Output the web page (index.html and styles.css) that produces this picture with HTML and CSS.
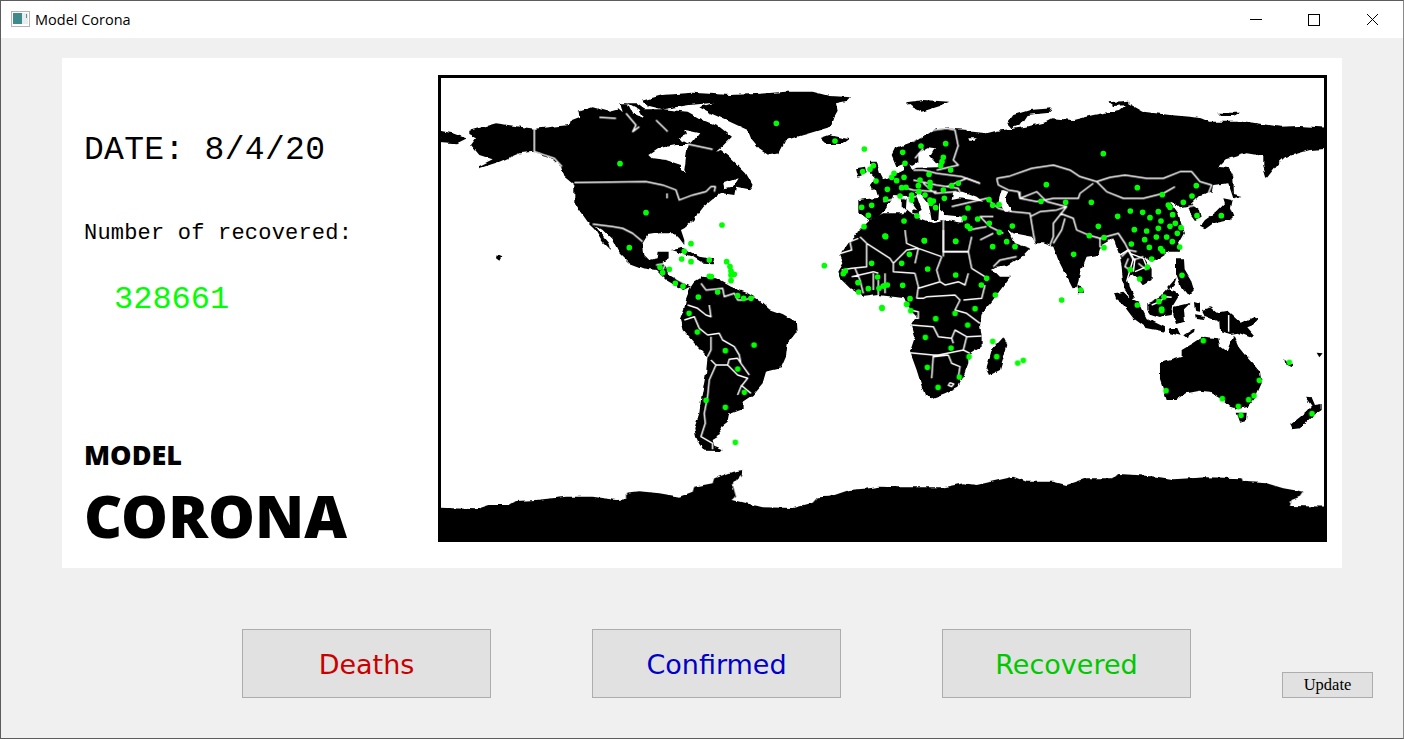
FILE: index.html
```html
<!DOCTYPE html>
<html lang="en">
<head>
    <meta charset="UTF-8">
    <meta name="viewport" content="width=device-width, initial-scale=1.0">
    <title>Model Corona</title>
    <link rel="stylesheet" href="styles.css">
</head>
<body>
    <div class="window">
        <div class="titlebar">
            <svg class="app-icon" width="20" height="17" viewBox="0 0 20 17">
                <rect x="0.5" y="0.5" width="18" height="15" fill="#fff" stroke="#b5b5b5"/>
                <rect x="2" y="2" width="9" height="11" fill="#3f8a8a"/>
                <rect x="11" y="2" width="6" height="11" fill="#e8eeee"/>
                <rect x="15" y="3" width="1" height="4" fill="#5f8f8f"/>
            </svg>
            <span class="app-title">Model Corona</span>
            <div class="controls">
                <svg class="control" width="58" height="38" viewBox="0 0 58 38"><path d="M23 18.5h12" stroke="#000" fill="none"/></svg>
                <svg class="control" width="58" height="38" viewBox="0 0 58 38"><rect x="23.5" y="13.5" width="11" height="11" stroke="#000" fill="none"/></svg>
                <svg class="control" width="58" height="38" viewBox="0 0 58 38"><path d="M24 13l11 11M35 13L24 24" stroke="#000" fill="none"/></svg>
            </div>
        </div>

        <div class="content">
            <div class="panel">
                <div class="info">
                    <div class="date">DATE: 8/4/20</div>
                    <div class="label">Number of recovered:</div>
                    <div class="count">328661</div>
                    <div class="brand">
                        <div class="brand-small">MODEL</div>
                        <div class="brand-big">CORONA</div>
                    </div>
                </div>
                <div class="map">
                    <svg width="883" height="461" viewBox="441 78 883 461">
                        <defs>
                            <filter id="coast" filterUnits="userSpaceOnUse" x="431" y="68" width="903" height="481">
                                <feTurbulence type="fractalNoise" baseFrequency="0.13" numOctaves="2" seed="4"/>
                                <feDisplacementMap in="SourceGraphic" scale="4" xChannelSelector="R" yChannelSelector="G"/>
                            </filter>
                        </defs>
                        <g filter="url(#coast)">
                        <!-- land -->
                        <g class="land" transform="translate(436 70) scale(.3333)">
                            <path d="M100,182 180,160 295,176 400,165 405,150 430,140 428,125 470,112 520,125 548,118 560,130 553,100 600,100 625,118 680,118 755,125 800,150 850,170 888,200 860,228 840,245 855,240 880,260 905,285 930,310 950,345 940,358 900,350 895,375 860,370 830,385 800,410 785,430 775,450 745,475 735,480 745,510 745,525 730,505 715,490 670,490 635,495 620,520 625,555 640,570 665,565 668,545 698,545 698,565 680,575 690,590 700,615 725,630 765,650 745,660 725,650 690,630 660,600 620,595 580,580 550,550 530,510 500,480 475,465 520,520 525,540 500,515 475,475 455,455 430,420 415,395 415,345 385,320 375,290 340,260 290,245 250,250 190,275 130,295 130,288 170,268 130,255 105,225 120,205 100,195Z"/>
                            <path d="M618,92 680,75 770,68 880,75 960,72 1050,65 1130,65 1180,78 1245,82 1235,92 1200,100 1205,122 1195,140 1185,170 1120,190 1050,210 1030,250 1000,255 970,235 945,205 935,180 870,150 820,128 790,112 835,98 760,105 680,118 640,108Z"/>
                            <path d="M0,180 50,190 90,205 60,220 0,215Z"/>
                            <path d="M182,556 196,562 190,572 180,565Z"/>
                            <path d="M1152,205 1180,195 1240,208 1220,222 1170,222Z"/>
                            <path d="M705,540 740,533 790,560 835,568 830,580 800,578 770,560 730,548Z"/>
                            <path d="M765,650 775,635 800,620 840,625 885,650 935,670 970,690 1000,718 1040,732 1080,755 1082,785 1055,820 1050,860 1035,895 990,905 980,940 950,975 920,995 920,1015 880,1030 875,1055 850,1075 855,1095 830,1110 835,1127 860,1137 855,1143 805,1142 790,1122 780,1100 775,1075 790,1030 795,990 810,910 815,860 775,820 740,780 732,750 745,715 750,690Z"/>
                        </g>
                        <g class="land" transform="translate(436 300) scale(.3333)">
                            <path d="M-20,622 120,628 160,615 220,615 240,603 300,600 390,590 470,590 540,600 570,598 570,578 610,574 670,580 730,590 770,575 775,560 830,550 835,535 890,515 920,510 918,525 890,555 900,590 890,600 980,622 1070,624 1130,608 1145,592 1180,590 1240,570 1300,565 1332,560 1392,562 1522,562 1582,550 1622,555 1732,530 1772,545 1852,545 1892,555 1952,535 2032,535 2047,522 2102,525 2162,530 2212,538 2312,532 2417,535 2422,545 2492,550 2542,565 2602,575 2592,590 2567,600 2562,618 2700,620 2700,760 -20,760Z"/>
                        </g>
                        <g class="land" transform="translate(850 120) scale(.3333)">
                            <path d="M290,25 255,28 215,55 180,68 135,85 125,105 140,140 165,130 185,140 205,125 205,100 235,82 255,85 240,110 258,130 300,125 320,100 350,100 350,30Z"/>
                            <path d="M25,240 85,233 75,200 65,185 110,175 160,150 160,130 175,130 185,150 200,143 265,142 265,125 300,125 400,120 400,300 340,290 285,285 282,255 268,250 265,300 245,300 235,250 215,225 195,215 215,270 205,275 170,228 130,225 125,240 105,270 85,290 60,300 40,285 25,280Z"/>
                            <path d="M60,125 80,125 90,160 105,190 100,205 65,210 60,195 75,175 60,160Z"/>
                            <path d="M18,145 45,140 50,160 25,170Z"/>
                            <path d="M155,235 170,235 168,265 155,265Z"/>
                            <path d="M190,268 208,272 205,282 190,280Z"/>
                        </g>
                        <g class="land" transform="translate(880 70) scale(.3333)">
                            <path d="M230,180 320,190 350,182 390,178 440,170 500,155 520,145 580,150 640,135 720,120 745,100 790,125 870,135 930,140 960,145 985,155 1100,155 1200,170 1260,168 1370,175 1370,235 1290,240 1215,262 1195,280 1160,325 1150,290 1150,258 1100,250 1040,268 1018,290 1048,295 1060,320 1062,372 1085,378 1060,385 1045,340 1000,345 995,365 960,375 935,400 960,420 965,440 945,450 930,430 925,410 900,415 885,400 870,395 895,430 905,465 915,490 895,525 900,545 865,545 835,565 815,575 790,560 800,575 815,600 815,630 790,645 775,625 755,610 745,625 750,655 765,685 755,690 735,660 728,625 725,590 720,560 700,505 665,525 655,555 620,560 600,610 590,655 578,655 550,600 535,570 520,530 490,520 465,520 455,500 400,490 385,478 405,520 450,535 425,560 385,585 350,590 310,612 285,570 262,520 240,470 250,440 200,430 180,420 180,300Z"/>
                            <path d="M382,160 400,135 450,120 515,115 510,128 440,135 420,165 395,175Z"/>
                            <path d="M78,97 130,90 208,95 180,108 125,125 95,110Z"/>
                            <path d="M685,97 745,92 745,105 700,108Z"/>
                            <path d="M1012,128 1080,128 1060,138 1020,138Z"/>
                            <path d="M960,470 975,450 1010,425 1035,400 1030,385 1055,390 1050,415 1060,440 1050,450 1000,460 975,478Z"/>
                            <path d="M592,648 608,652 612,668 596,670Z"/>
                            <path d="M895,520 905,530 897,545 890,535Z"/>
                        </g>
                        <g class="land" transform="translate(835 230) scale(.3333)">
                            <path d="M105,-30 145,-50 205,-50 215,-65 245,-40 295,-20 335,-30 390,-20 410,30 445,110 480,125 495,140 525,140 500,175 470,215 440,250 435,285 440,320 440,350 400,375 400,400 385,440 370,470 330,490 290,505 270,495 262,475 245,420 225,365 240,320 230,285 245,260 225,240 210,205 175,200 130,195 85,200 45,175 20,150 10,125 25,100 15,75 40,40 60,20 75,0Z"/>
                            <path d="M505,322 517,345 495,420 465,435 455,415 470,360Z"/>
                        </g>
                        <g class="land" transform="translate(1110 240) scale(.3333)">
                            <path d="M12,160 40,155 60,175 85,185 110,235 165,262 165,275 110,264 70,235 40,195 18,178Z"/>
                            <path d="M112,190 150,172 172,148 195,152 205,170 190,195 185,225 165,228 150,234 122,225 112,210Z"/>
                            <path d="M192,200 242,188 222,208 225,245 198,252 190,225Z"/>
                            <path d="M198,58 222,58 224,88 242,118 252,150 235,168 213,140 198,100Z"/>
                            <path d="M175,140 200,112 192,135 178,150Z"/>
                            <path d="M252,183 270,188 270,215 255,212Z"/>
                            <path d="M255,223 285,228 282,240 258,237Z"/>
                            <path d="M276,210 300,202 320,218 355,212 395,248 430,232 444,238 428,256 412,262 432,285 420,292 385,278 360,282 330,272 328,246 285,228Z"/>
                            <path d="M175,264 202,264 212,287 180,280Z"/>
                            <path d="M220,286 255,263 252,276 228,292Z"/>
                        </g>
                        <g class="land" transform="translate(880 300) scale(.3333)">
                            <path d="M840,190 905,170 905,150 940,130 970,110 1015,115 1020,140 1040,155 1060,105 1075,140 1095,165 1140,215 1145,250 1125,295 1105,320 1075,328 1050,320 1025,295 990,275 960,272 920,280 890,300 860,300 840,240Z"/>
                            <path d="M1070,338 1100,338 1098,360 1080,365Z"/>
                            <path d="M1275,290 1295,292 1305,315 1325,312 1325,330 1295,350 1260,385 1235,388 1230,375 1280,335 1295,318Z"/>
                            <path d="M1213,178 1240,193 1237,202 1216,192Z"/>
                            <path d="M1310,158 1328,160 1318,172Z"/>
                        </g>

                        <!-- inland water -->
                        <g class="water" transform="translate(436 70) scale(.3333)">
                            <path d="M640,255 670,235 720,225 755,225 750,265 745,300 750,310 735,300 735,285 690,270 650,265Z"/>
                            <path d="M725,205 750,195 745,180 790,190 770,215 755,222Z"/>
                            <path d="M862,340 905,325 890,350 865,355Z"/>
                            <path d="M575,100 610,118 625,145 590,130Z"/>
                        </g>
                        <g class="water" transform="translate(880 70) scale(.3333)">
                            <path d="M220,365 250,365 290,380 310,395 280,390 240,385 215,390Z"/>
                            <path d="M365,360 385,365 375,385 395,425 375,425 355,395Z"/>
                            <path d="M265,205 290,205 285,212 268,212Z"/>
                        </g>
                        </g>

                        <!-- borders -->
                        <g class="borders" transform="translate(436 70) scale(.3333)">
                            <path d="M295,176 295,245 325,255 355,265 378,290M415,338 630,335 680,345 720,360 730,390 770,375 810,365 825,350 838,350 835,365M470,462 530,470 560,475 590,490 620,515"/>
                            <path d="M490,142 540,145M570,130 600,165 590,185 610,170M660,150 680,170 695,185M755,222 830,238M693,370 693,385"/>
                            <path d="M795,640 810,660 860,655 865,680 895,670 905,690 925,690 960,680"/>
                            <path d="M660,585 690,580 680,600M720,625 745,640"/>
                        </g>
                        <g class="borders" transform="translate(436 300) scale(.3333)">
                            <path d="M755,15 785,25 810,45 825,50 820,15M790,85 815,105 850,100 860,120 895,140 910,165 915,190M840,195 820,240 815,290 805,340 808,370 795,410 830,430 830,448M840,195 875,195 905,225 935,235 915,260 905,285M875,195 880,178 905,175 915,190 940,225M915,255 945,280M815,170 825,150 825,110M825,180 840,195M745,60 775,50 790,85"/>
                        </g>
                        <g class="borders" transform="translate(880 70) scale(.3333)">
                            <path d="M350,325 390,318 455,295 520,285 570,300 600,320 650,335 690,322 735,315 800,325 850,325 900,305 935,305 960,335 995,345 985,370M650,335 680,365 730,385 790,385 850,370 885,350M350,325 355,345 385,360 415,365 420,385 470,395 520,385 595,385 600,370 640,340"/>
                            <path d="M540,430 580,445 590,480 625,495 660,505 715,490 735,520 745,540 770,545M355,415 395,425 450,430 460,490 465,515M450,440 480,425 530,420 560,410 520,460 520,500 510,525M555,445 545,480 520,520M340,440 300,440 330,470 370,490M340,590 360,570 410,560M215,410 320,385 355,415M925,410 950,405"/>
                            <path d="M420,365 420,385 470,365 500,395M500,395 540,405 560,410M660,505 660,530 680,535M725,560 745,540 760,570 790,560M745,565 735,590 750,600M775,580 800,600M300,510 340,490M320,470 265,480M190,440 190,560M190,545 265,545M200,350 260,325 300,340"/>
                            <path d="M235,225 220,270 235,285 170,300M100,215 130,185 200,175 225,180 235,230M105,265 130,235M100,300 130,300 170,310 245,320 300,340M100,330 170,345 235,355 245,380M130,340 165,370 230,365M60,350 100,360 170,365M10,395 50,385 70,385 110,380"/>
                        </g>
                        <g class="borders" transform="translate(835 230) scale(.3333)">
                            <path d="M10,72 50,60 45,35 70,25M75,20 95,40 165,85M95,40 95,110 50,115 20,120M165,85 175,100 215,60 250,55M210,0 215,40 250,55 320,80M325,0 325,65 400,65M320,80 305,120 315,155M410,20 400,65 410,115M410,115 450,140M315,155 250,175M175,100 175,125 240,130M250,55 240,100M240,130 250,170 245,205"/>
                            <path d="M245,205 265,205 275,200 360,195 375,210 360,240 395,250 435,280M385,210 440,205 450,165M400,130 390,165 370,155 330,165 315,155M50,140 115,125 130,130M60,115 75,150 85,190M115,130 115,180M130,150 130,195M150,130 150,190M225,240 250,245 250,265 230,265"/>
                            <path d="M230,285 295,290 310,320 350,325 355,340M225,368 295,375 310,375 385,360M295,375 290,445M385,360 395,320 440,318M350,325 360,300 395,320M340,375 350,400 375,410 370,440M385,360 405,370M295,380 340,375M345,458 356,462 350,470 340,466Z"/>
                        </g>
                        <g class="borders" transform="translate(1110 240) scale(.3333)">
                            <path d="M356,225 356,275M125,195 150,185 165,170 185,172"/>
                            <path d="M30,45 55,30 70,55 50,125M60,40 100,55 110,80 75,95M75,55 70,95"/>
                        </g>

                        <!-- recovered cases -->
                        <g class="dots" transform="translate(436 70) scale(.3333)">
                            <path d="M1021,160h.1M1197,213h.1M552,281h.1M630,428h.1M858,465h.1M765,521h.1M745,544h.1M737,567h.1M765,575h.1M820,570h.1M872,575h.1M882,590h.1M885,603h.1M895,613h.1M885,615h.1M820,619h.1M826,620h.1M885,632h.1M580,533h.1M672,592h.1M700,598h.1M680,608h.1M718,640h.1M741,649h.1M787,681h.1M845,666h.1M905,677h.1M923,685h.1M945,685h.1M1165,587h.1M1307,580h.1M1228,603h.1M1222,611h.1M1266,638h.1M1325,621h.1M1268,666h.1M1297,656h.1M1329,655h.1M1342,648h.1M1338,713h.1M1347,498h.1"/>
                        </g>
                        <g class="dots" transform="translate(436 300) scale(.3333)">
                            <path d="M759,40h.1M784,96h.1M868,152h.1M954,135h.1M905,207h.1M925,277h.1M810,301h.1M868,322h.1M898,427h.1"/>
                        </g>
                        <g class="dots" transform="translate(850 120) scale(.3333)">
                            <path d="M43,87h.1M38,155h.1M60,148h.1M70,137h.1M78,183h.1M112,208h.1M107,237h.1M65,256h.1M35,262h.1M55,286h.1M42,320h.1M107,350h.1M158,97h.1M213,78h.1M287,71h.1M165,130h.1M280,112h.1M276,125h.1M272,137h.1M302,150h.1M237,163h.1M125,172h.1M132,160h.1M140,182h.1M162,172h.1M155,203h.1M168,202h.1M210,180h.1M205,197h.1M207,215h.1M240,187h.1M240,200h.1M280,210h.1M305,197h.1M325,190h.1M150,228h.1M185,225h.1M185,240h.1M225,225h.1M240,240h.1M250,243h.1M243,250h.1M283,235h.1M257,263h.1M162,303h.1M201,288h.1M223,362h.1M317,364h.1M354,264h.1M343,294h.1M383,297h.1M352,318h.1M360,325h.1M417,239h.1M428,256h.1M447,254h.1M418,310h.1M487,318h.1M448,337h.1M470,365h.1M428,380h.1M495,380h.1"/>
                        </g>
                        <g class="dots" transform="translate(880 70) scale(.3333)">
                            <path d="M670,251h.1M772,353h.1M847,374h.1M949,347h.1M936,378h.1M910,397h.1M865,405h.1M870,412h.1M878,434h.1M951,437h.1M1024,437h.1M499,344h.1M483,394h.1M557,397h.1M634,397h.1M713,439h.1M751,423h.1M788,427h.1M835,425h.1M810,443h.1M843,453h.1M870,469h.1M886,460h.1M903,473h.1M763,479h.1M800,483h.1M835,475h.1M892,490h.1M754,522h.1M794,509h.1M829,501h.1M860,501h.1M877,515h.1M808,532h.1M842,536h.1M848,543h.1M899,531h.1M815,567h.1M655,469h.1M628,497h.1M672,503h.1M672,533h.1M581,553h.1M751,599h.1M802,591h.1M779,627h.1M602,660h.1M545,690h.1M906,616h.1M772,705h.1M852,681h.1M837,695h.1M845,717h.1M227,514h.1M133,512h.1M16,499h.1M88,553h.1M65,580h.1M143,597h.1M227,615h.1M68,646h.1M22,645h.1M13,648h.1M320,625h.1M304,645h.1M346,675h.1M90,686h.1M80,703h.1"/>
                        </g>
                        <g class="dots" transform="translate(880 300) scale(.3333)">
                            <path d="M6,25h.1M80,13h.1M92,32h.1M167,56h.1M285,26h.1M225,40h.1M263,75h.1M136,112h.1M338,124h.1M213,144h.1M267,170h.1M350,170h.1M413,189h.1M430,181h.1M142,202h.1M238,231h.1M174,262h.1M845,32h.1M970,122h.1M1138,241h.1M1122,287h.1M1106,299h.1M1075,319h.1M1027,296h.1M858,272h.1M1083,346h.1M1228,187h.1M1296,341h.1"/>
                        </g>
                    </svg>
                </div>
            </div>

            <div class="actions">
                <button class="button big deaths">Deaths</button>
                <button class="button big confirmed">Confirmed</button>
                <button class="button big recovered">Recovered</button>
                <button class="button update">Update</button>
            </div>
        </div>
    </div>
</body>
</html>
```

FILE: styles.css
```css
body {
    margin: 0;
    background-color: #f0f0f0;
}

.window {
    box-sizing: border-box;
    width: 1404px;
    height: 739px;
    border: 1px solid #5c5c5c;
    border-right-color: #8a8a8a;
    display: flex;
    flex-direction: column;
    overflow: hidden;
}

.titlebar {
    height: 37px;
    background: #ffffff;
    display: flex;
    align-items: center;
    padding-left: 10px;
    flex-shrink: 0;
}

.app-icon {
    margin-right: 4px;
}

.app-title {
    font-family: "Open Sans", sans-serif;
    font-size: 14.5px;
    color: #000;
}

.controls {
    margin-left: auto;
    display: flex;
    margin-right: 2px;
}

.control {
    display: block;
}

.content {
    flex: 1;
    padding-top: 20px;
}

.panel {
    height: 510px;
    margin: 0 61px;
    box-sizing: border-box;
    background: #ffffff;
    padding: 17px 15px 26px 22px;
    display: flex;
}

.info {
    width: 354px;
    display: flex;
    flex-direction: column;
}

.date {
    margin-top: 58px;
    font-family: "Liberation Mono", monospace;
    font-size: 33px;
    line-height: 36px;
    letter-spacing: 0.3px;
    white-space: nowrap;
}

.label {
    margin-top: 52px;
    font-family: "Liberation Mono", monospace;
    font-size: 22px;
    line-height: 26px;
    letter-spacing: 0.2px;
    white-space: nowrap;
}

.count {
    margin-top: 35px;
    margin-left: 30px;
    font-family: "Liberation Mono", monospace;
    font-size: 32px;
    line-height: 36px;
    color: #00ff00;
}

.brand {
    margin-top: auto;
    font-family: "Noto Sans", sans-serif;
    font-weight: 900;
    color: #000;
}

.brand-small {
    font-size: 27px;
    line-height: 32px;
}

.brand-big {
    font-size: 59px;
    line-height: 54px;
    margin-top: 17px;
}

.map {
    width: 889px;
    height: 467px;
    box-sizing: border-box;
    border: 3px solid #000;
    background: #ffffff;
}

.map svg {
    display: block;
}

.land path {
    fill: #000;
}

.water path {
    fill: #fff;
}

.borders path {
    fill: none;
    stroke: #ffffff;
    stroke-width: 4.5;
    stroke-linejoin: round;
}

.dots path {
    fill: none;
    stroke: #00ff00;
    stroke-width: 17;
    stroke-linecap: round;
}

.actions {
    margin-top: 61px;
    padding-left: 241px;
    padding-right: 30px;
    display: flex;
    align-items: flex-end;
}

.button {
    box-sizing: border-box;
    background: #e1e1e1;
    border: 1px solid #adadad;
    padding: 0;
}

.button.big {
    flex: none;
    width: 249px;
    height: 69px;
    font-family: "DejaVu Sans", sans-serif;
    font-size: 27px;
    padding-top: 1px;
}

.button.big + .button.big {
    margin-left: 101px;
}

.deaths {
    color: #c80000;
}

.confirmed {
    color: #0000c8;
}

.recovered {
    color: #00c800;
}

.update {
    flex: none;
    width: 91px;
    height: 26px;
    margin-left: auto;
    font-family: "Liberation Serif", serif;
    font-size: 16.5px;
    color: #000;
}
```
